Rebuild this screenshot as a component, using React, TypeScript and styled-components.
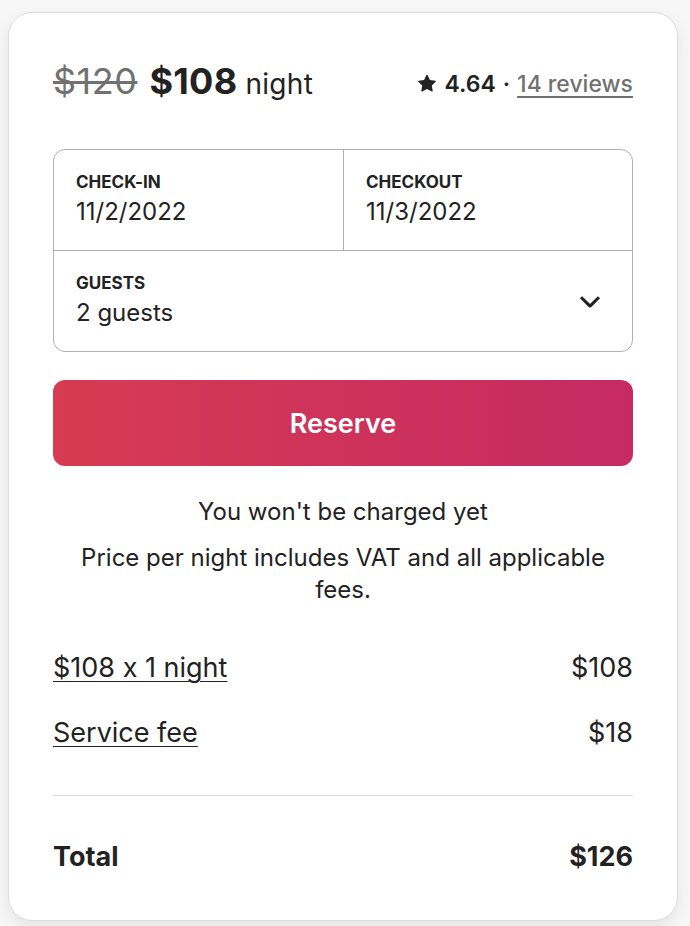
import styled, { createGlobalStyle } from "styled-components";

const GlobalStyle = createGlobalStyle`
  html, body {
    margin: 0;
    padding: 0;
    background: #f7f7f7;
  }
  body {
    font-family: Inter, "Noto Sans", "Liberation Sans", sans-serif;
    font-feature-settings: "calt" 0;
    color: #222222;
  }
`;

const Page = styled.div`
  padding: 12px 12px 8px 8px;
`;

const Card = styled.div`
  width: 670px;
  box-sizing: border-box;
  background: #ffffff;
  border: 1px solid #dddddd;
  border-radius: 24px;
  box-shadow: 0 6px 16px rgba(0, 0, 0, 0.08);
  padding: 44px 44px 45px;
`;

const Header = styled.div`
  display: flex;
  justify-content: space-between;
  align-items: baseline;
  line-height: 48px;
  margin-bottom: 41px;
`;

const PriceLine = styled.div`
  display: flex;
  align-items: baseline;
  gap: 12px;
`;

const OldPrice = styled.span`
  font-size: 36px;
  color: #717171;
  text-decoration: line-through;
  text-decoration-thickness: 3px;
  letter-spacing: 0.5px;
`;

const NewPrice = styled.span`
  font-size: 36px;
  font-weight: 700;
  letter-spacing: 0.3px;
`;

const Unit = styled.span`
  font-size: 28px;
  margin-left: -4px;
  letter-spacing: 0.3px;
`;

const Rating = styled.div`
  display: flex;
  align-items: center;
  gap: 7px;
  font-size: 23px;
  font-weight: 600;
`;

const Reviews = styled.a`
  color: #717171;
  font-weight: 500;
  text-decoration: underline;
  text-underline-offset: 4px;
`;

const Picker = styled.div`
  border: 1px solid #b0b0b0;
  border-radius: 12px;
  overflow: hidden;
`;

const DateRow = styled.div`
  display: grid;
  grid-template-columns: 1fr 1fr;
  border-bottom: 1px solid #b0b0b0;
`;

const Field = styled.div<{ $divider?: boolean }>`
  padding: 22px 22px 23px;
  border-left: ${({ $divider }) => ($divider ? "1px solid #b0b0b0" : "none")};
  display: flex;
  flex-direction: column;
  gap: 5px;
`;

const GuestRow = styled.div`
  display: flex;
  justify-content: space-between;
  align-items: center;
  padding-right: 30px;
`;

const Label = styled.div`
  font-size: 17px;
  line-height: 20px;
  font-weight: 700;
  text-transform: uppercase;
`;

const Value = styled.div`
  font-size: 24px;
  line-height: 30px;
`;

const ReserveButton = styled.button`
  display: block;
  width: 100%;
  height: 86px;
  margin-top: 28px;
  border: none;
  border-radius: 12px;
  background: linear-gradient(to right, #d73b52, #c52a63);
  color: #ffffff;
  font-family: inherit;
  font-size: 27px;
  font-weight: 600;
  cursor: pointer;
`;

const Notes = styled.div`
  display: flex;
  flex-direction: column;
  gap: 14px;
  margin-top: 30px;
`;

const Note = styled.p`
  margin: 0;
  text-align: center;
  font-size: 24px;
  line-height: 32px;
`;

const Breakdown = styled.div`
  display: flex;
  flex-direction: column;
  gap: 29px;
  margin-top: 44px;
  padding-bottom: 44px;
  border-bottom: 1px solid #dddddd;
`;

const Line = styled.div<{ $bold?: boolean }>`
  display: flex;
  justify-content: space-between;
  font-size: 27px;
  line-height: 36px;
  font-weight: ${({ $bold }) => ($bold ? 700 : 400)};
`;

const LineLabel = styled.span`
  text-decoration: underline;
  text-underline-offset: 4px;
  text-decoration-thickness: 1px;
`;

const TotalLine = styled(Line)`
  margin-top: 43px;
`;

const Star = () => (
  <svg width="20" height="20" viewBox="0 0 32 32" fill="#222222">
    <path d="M15.1 1.58 11.3 9.4l-8.6 1.25a1 1 0 0 0-.55 1.7l6.22 6.07-1.47 8.57a1 1 0 0 0 1.45 1.050L16 24.02l7.7 4.04a1 1 0 0 0 1.45-1.05l-1.47-8.57 6.22-6.07a1 1 0 0 0-.55-1.7L20.7 9.4 16.9 1.58a1 1 0 0 0-1.8 0z" />
  </svg>
);

const Chevron = () => (
  <svg width="24" height="24" viewBox="0 0 32 32" fill="none" stroke="#222222" strokeWidth="4.2">
    <path d="M28 11 16.7 22.3a1 1 0 0 1-1.4 0L4 11" />
  </svg>
);

export default function App() {
  return (
    <>
      <GlobalStyle />
      <Page>
        <Card>
          <Header>
            <PriceLine>
              <OldPrice>$120</OldPrice>
              <NewPrice>$108</NewPrice>
              <Unit>night</Unit>
            </PriceLine>
            <Rating>
              <Star />
              <span>4.64</span>
              <span>·</span>
              <Reviews>14 reviews</Reviews>
            </Rating>
          </Header>

          <Picker>
            <DateRow>
              <Field>
                <Label>Check-in</Label>
                <Value>11/2/2022</Value>
              </Field>
              <Field $divider>
                <Label>Checkout</Label>
                <Value>11/3/2022</Value>
              </Field>
            </DateRow>
            <GuestRow>
              <Field>
                <Label>Guests</Label>
                <Value>2 guests</Value>
              </Field>
              <Chevron />
            </GuestRow>
          </Picker>

          <ReserveButton>Reserve</ReserveButton>

          <Notes>
            <Note>You won't be charged yet</Note>
            <Note>Price per night includes VAT and all applicable fees.</Note>
          </Notes>

          <Breakdown>
            <Line>
              <LineLabel>$108 x 1 night</LineLabel>
              <span>$108</span>
            </Line>
            <Line>
              <LineLabel>Service fee</LineLabel>
              <span>$18</span>
            </Line>
          </Breakdown>

          <TotalLine $bold>
            <span>Total</span>
            <span>$126</span>
          </TotalLine>
        </Card>
      </Page>
    </>
  );
}
